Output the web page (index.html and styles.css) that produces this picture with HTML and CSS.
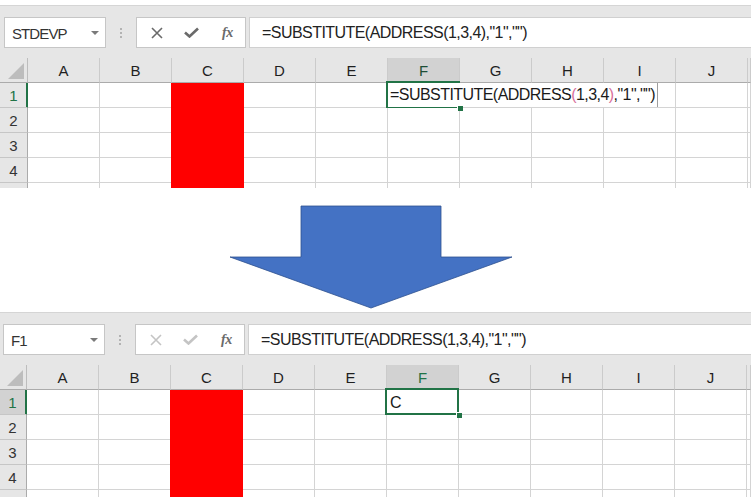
FILE: index.html
```html
<!DOCTYPE html>
<html>
<head>
<meta charset="utf-8">
<link rel="stylesheet" href="styles.css">
</head>
<body>
<div class="shot shot-top">
  <div class="toolbar">
    <div class="namebox"><span class="name">STDEVP</span><span class="caret"></span></div>
    <div class="grip"><i></i><i></i><i></i></div>
    <div class="fxbox">
      <span class="slot"><svg class="ico" width="12" height="12" viewBox="0 0 12 12"><path d="M1 1L11 11M11 1L1 11" stroke="#6a6a6a" stroke-width="1.6" fill="none"/></svg></span>
      <span class="slot"><svg class="ico" width="15" height="11" viewBox="0 0 15 11"><path d="M1 5.5L5.5 9.5L14 1.5" stroke="#6a6a6a" stroke-width="2.6" fill="none"/></svg></span>
      <span class="slot fx">fx</span>
    </div>
    <div class="formula">=SUBSTITUTE(ADDRESS(1,3,4),"1","")</div>
  </div>
  <div class="grid">
    <div class="corner"><svg width="17" height="17" viewBox="0 0 17 17"><path d="M0 16L16 16L16 0Z" fill="#bdbdbd"/></svg></div>
    <div class="ch">A</div><div class="ch">B</div><div class="ch">C</div><div class="ch">D</div><div class="ch">E</div><div class="ch ch-on">F</div><div class="ch">G</div><div class="ch">H</div><div class="ch">I</div><div class="ch">J</div><div class="ch"></div>

    <div class="rh rh-mark">1</div><div></div><div></div><div class="red"></div><div></div><div></div>
    <div class="sel"><span class="frame"></span><div class="editor">=SUBSTITUTE(ADDRESS<span class="p">(</span>1,3,4<span class="p">)</span>,"1","")</div><span class="handle"></span></div>
    <div></div><div></div><div></div><div></div><div></div>

    <div class="rh">2</div><div></div><div></div><div class="red"></div><div></div><div></div><div></div><div></div><div></div><div></div><div></div><div></div>
    <div class="rh">3</div><div></div><div></div><div class="red"></div><div></div><div></div><div></div><div></div><div></div><div></div><div></div><div></div>
    <div class="rh">4</div><div></div><div></div><div class="red"></div><div></div><div></div><div></div><div></div><div></div><div></div><div></div><div></div>
    <div class="rh"></div><div></div><div></div><div class="red"></div><div></div><div></div><div></div><div></div><div></div><div></div><div></div><div></div>
  </div>
</div>

<div class="arrow-zone">
  <svg width="751" height="124" viewBox="0 0 751 124"><polygon points="301,18 441,18 441,69 512,69 371,120 230,69 301,69" fill="#4472c4" stroke="#2f528f" stroke-width="0.8"/></svg>
</div>

<div class="shot shot-bottom">
  <div class="toolbar">
    <div class="namebox"><span class="name">F1</span><span class="caret"></span></div>
    <div class="grip"><i></i><i></i><i></i></div>
    <div class="fxbox">
      <span class="slot"><svg class="ico" width="12" height="12" viewBox="0 0 12 12"><path d="M1 1L11 11M11 1L1 11" stroke="#c4c4c4" stroke-width="1.6" fill="none"/></svg></span>
      <span class="slot"><svg class="ico" width="15" height="11" viewBox="0 0 15 11"><path d="M1 5.5L5.5 9.5L14 1.5" stroke="#c4c4c4" stroke-width="2.6" fill="none"/></svg></span>
      <span class="slot fx">fx</span>
    </div>
    <div class="formula">=SUBSTITUTE(ADDRESS(1,3,4),"1","")</div>
  </div>
  <div class="grid">
    <div class="corner"><svg width="17" height="17" viewBox="0 0 17 17"><path d="M0 16L16 16L16 0Z" fill="#bdbdbd"/></svg></div>
    <div class="ch">A</div><div class="ch">B</div><div class="ch">C</div><div class="ch">D</div><div class="ch">E</div><div class="ch ch-on ch-green">F</div><div class="ch">G</div><div class="ch">H</div><div class="ch">I</div><div class="ch">J</div><div class="ch"></div>

    <div class="rh rh-mark rh-on">1</div><div></div><div></div><div class="red"></div><div></div><div></div>
    <div class="sel"><span class="val">C</span><span class="frame"></span><span class="handle"></span></div>
    <div></div><div></div><div></div><div></div><div></div>

    <div class="rh">2</div><div></div><div></div><div class="red"></div><div></div><div></div><div></div><div></div><div></div><div></div><div></div><div></div>
    <div class="rh">3</div><div></div><div></div><div class="red"></div><div></div><div></div><div></div><div></div><div></div><div></div><div></div><div></div>
    <div class="rh">4</div><div></div><div></div><div class="red"></div><div></div><div></div><div></div><div></div><div></div><div></div><div></div><div></div>
    <div class="rh"></div><div></div><div></div><div class="red"></div><div></div><div></div><div></div><div></div><div></div><div></div><div></div><div></div>
  </div>
</div>
</body>
</html>
```

FILE: styles.css
```css
html, body {
  margin: 0;
  padding: 0;
  background: #ffffff;
}
body {
  width: 751px;
  height: 497px;
  overflow: hidden;
  font-family: "Liberation Sans", Arial, sans-serif;
  color: #222;
}
.shot {
  background: #e6e6e6;
  overflow: hidden;
}
.shot-top {
  margin-top: 5px;
  height: 183px;
}
.shot-bottom {
  height: 185px;
  margin-left: -1px;
}
.toolbar {
  height: 53px;
  box-sizing: border-box;
  border-top: 1px solid #d5d5d5;
  padding: 11px 0 0 4px;
  display: flex;
  align-items: flex-start;
}
.namebox {
  width: 102px;
  height: 31px;
  box-sizing: border-box;
  border: 1px solid #c6c6c6;
  background: #fff;
  display: flex;
  align-items: center;
  justify-content: space-between;
  padding: 0 6px 0 7px;
}
.name {
  font-size: 15px;
  letter-spacing: -0.9px;
  color: #333;
  padding-top: 1px;
}
.caret {
  width: 0;
  height: 0;
  border-left: 4px solid transparent;
  border-right: 4px solid transparent;
  border-top: 4px solid #7a7a7a;
}
.grip {
  width: 30px;
  height: 31px;
  display: flex;
  flex-direction: column;
  align-items: center;
  justify-content: center;
  gap: 2px;
}
.grip i {
  display: block;
  width: 2px;
  height: 2px;
  background: #b3b3b3;
}
.fxbox {
  width: 110px;
  height: 31px;
  box-sizing: border-box;
  border: 1px solid #c6c6c6;
  background: #fff;
  display: flex;
  align-items: center;
  padding-left: 2px;
}
.slot {
  width: 36px;
  display: flex;
  justify-content: center;
  align-items: center;
}
.ico { display: block; }
.fx {
  font-family: "Liberation Serif", "Times New Roman", serif;
  font-style: italic;
  font-weight: bold;
  font-size: 14px;
  color: #6a6a6a;
  letter-spacing: -0.5px;
}
.formula {
  flex: 1;
  margin-left: 3px;
  margin-right: -4px;
  height: 31px;
  box-sizing: border-box;
  border: 1px solid #d0d0d0;
  background: #fff;
  padding-left: 12px;
  font-size: 16px;
  letter-spacing: -0.55px;
  line-height: 29px;
  color: #222;
  white-space: nowrap;
}
.grid {
  display: grid;
  grid-template-columns: 28px repeat(10, 72px) 1fr;
  grid-auto-rows: 25px;
  background: #fff;
}
.grid > div {
  box-sizing: border-box;
  border-right: 1px solid #d4d4d4;
  border-bottom: 1px solid #d4d4d4;
}
.grid > .corner {
  background: #e6e6e6;
  border-right-color: #bdbdbd;
  border-bottom-color: #ababab;
  display: flex;
  align-items: flex-end;
  justify-content: flex-end;
  padding: 0 2px 2px 0;
}
.grid > .ch {
  background: #e6e6e6;
  border-right-color: #cbcbcb;
  border-bottom-color: #ababab;
  text-align: center;
  font-size: 15px;
  line-height: 25px;
  color: #1f1f1f;
}
.grid > .ch-on {
  background: #d2d2d2;
  color: #1d4e36;
}
.grid > .ch-green {
  color: #217346;
}
.grid > .rh {
  background: #e6e6e6;
  border-right-color: #ababab;
  border-bottom-color: #c6c6c6;
  text-align: center;
  font-size: 15px;
  line-height: 25px;
  color: #333;
}
.grid > .rh-mark {
  color: #217346;
  box-shadow: inset -1px 0 0 #217346;
  border-right-color: #217346;
}
.grid > .rh-on {
  background: #d2d2d2;
}
.grid > .red {
  background: #ff0000;
  border-right-color: #ff0000;
  border-bottom-color: #ff0000;
  box-shadow: -1px 0 0 #ff0000;
}
.sel {
  position: relative;
}
.editor {
  position: absolute;
  z-index: 2;
  left: 0;
  top: 0;
  bottom: 0;
  width: 270px;
  box-sizing: border-box;
  background: #fff;
  border-right: 1px solid #9e9e9e;
  padding-left: 2px;
  font-size: 16px;
  letter-spacing: -0.55px;
  line-height: 24px;
  color: #1a1a1a;
  white-space: nowrap;
}
.editor .p {
  color: #d9709c;
}
.val {
  display: block;
  padding-left: 3px;
  font-size: 16px;
  line-height: 25px;
  color: #1a1a1a;
}
.frame {
  position: absolute;
  z-index: 1;
  left: -2px;
  top: -2px;
  right: -1px;
  bottom: -1px;
  border: 2px solid #217346;
}
.handle {
  position: absolute;
  z-index: 3;
  right: -4px;
  bottom: -4px;
  width: 5px;
  height: 5px;
  background: #217346;
  border: 1px solid #fff;
  border-width: 1px 0 0 1px;
}
.arrow-zone {
  height: 124px;
}
.arrow-zone svg {
  display: block;
}
```
